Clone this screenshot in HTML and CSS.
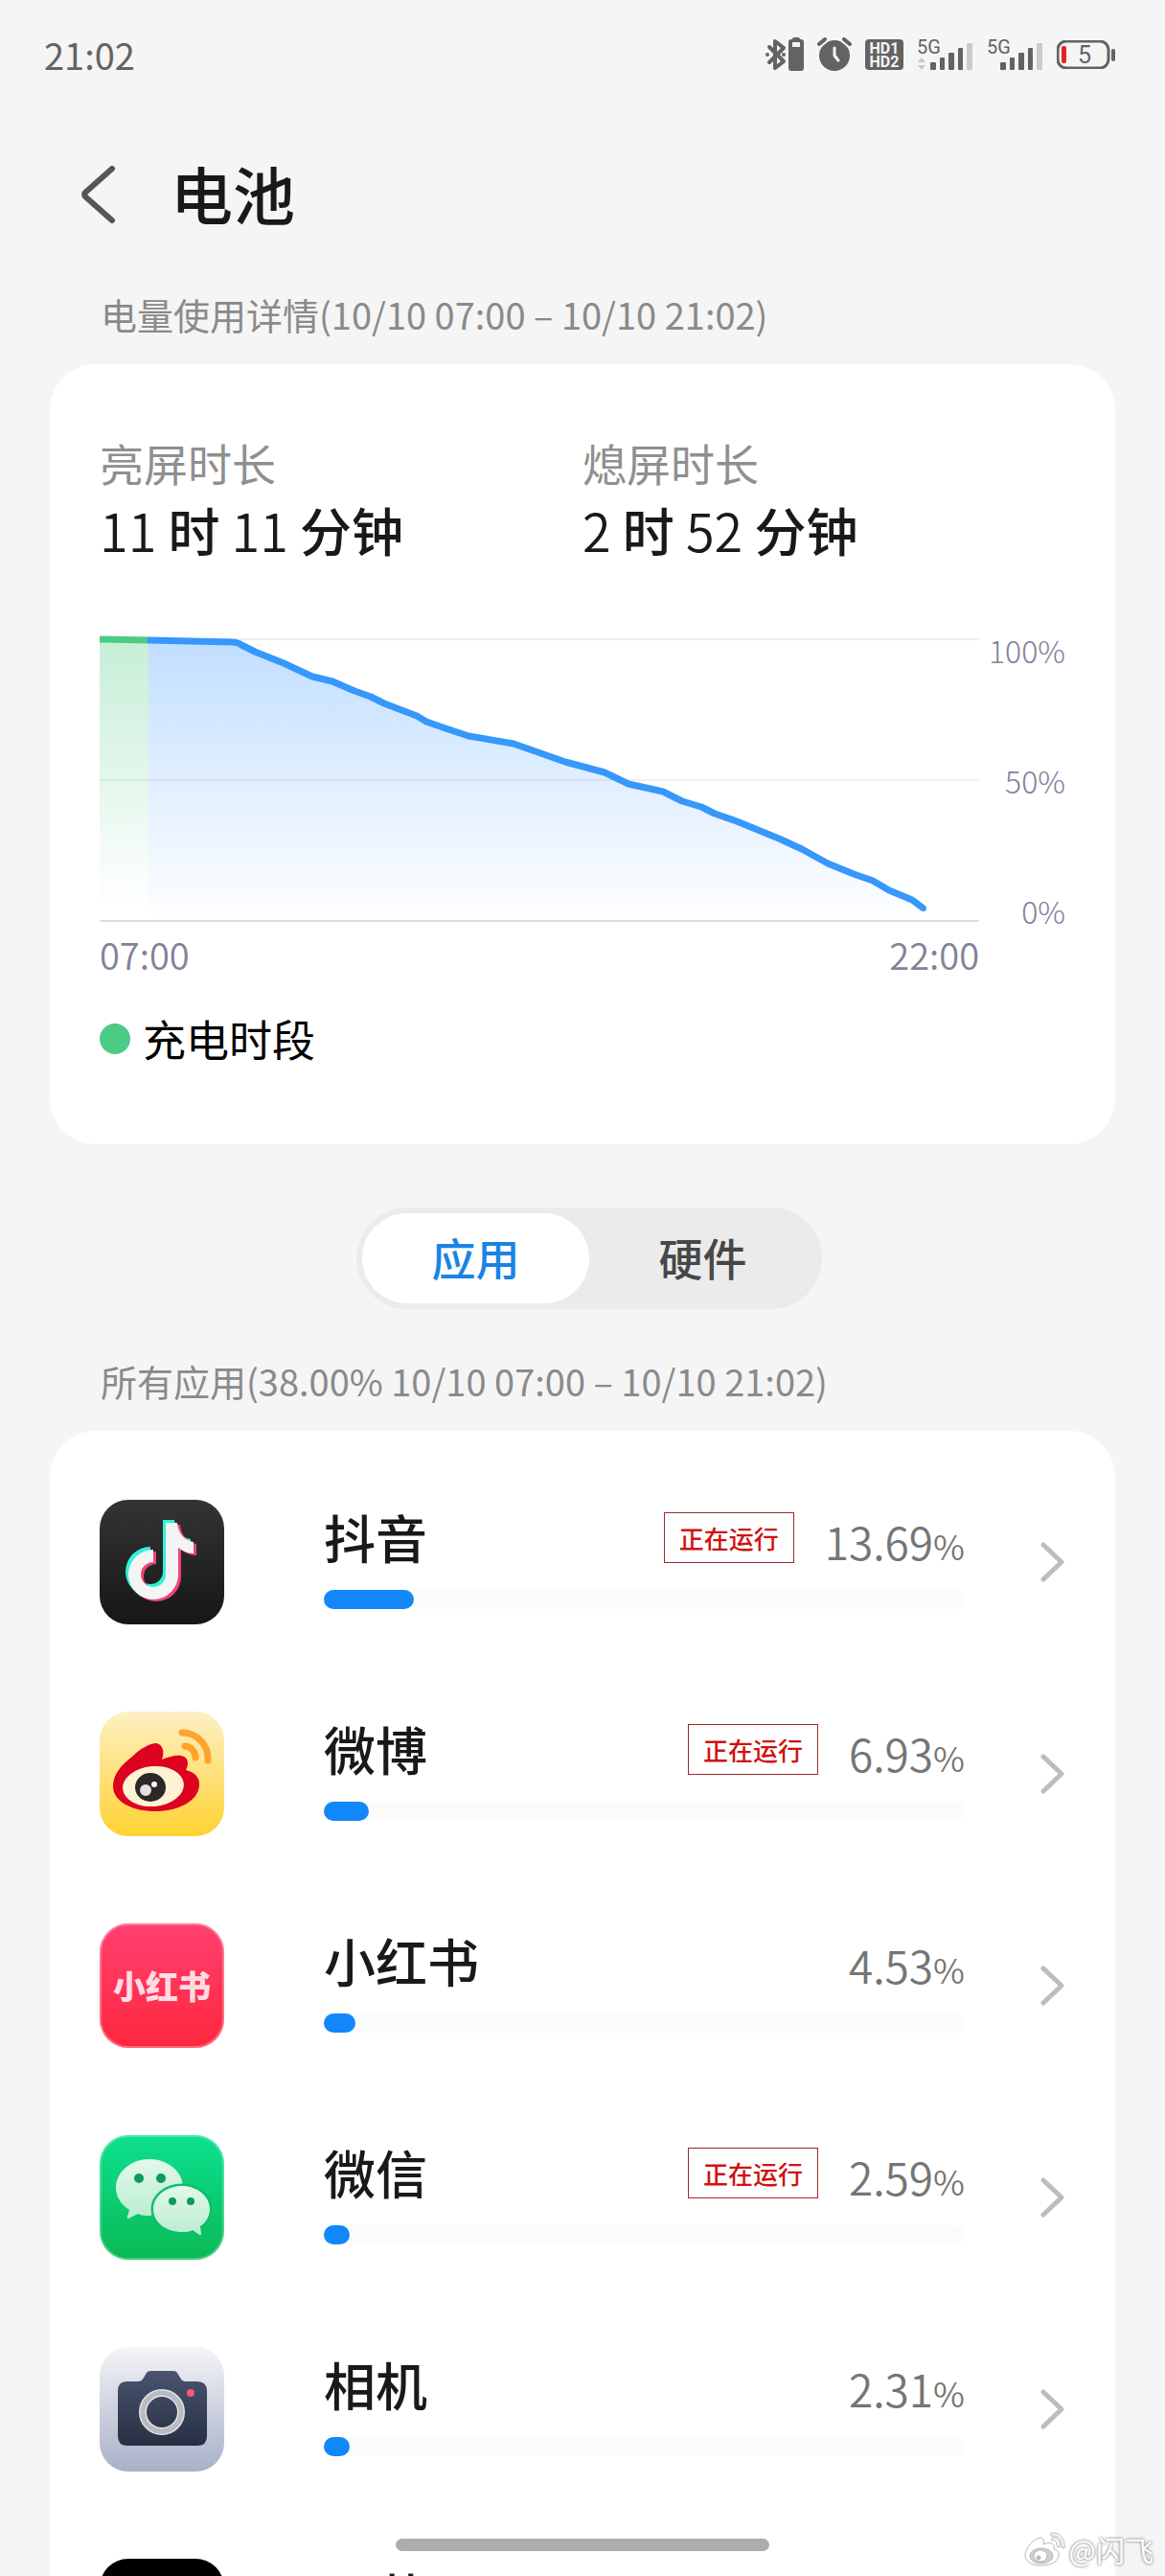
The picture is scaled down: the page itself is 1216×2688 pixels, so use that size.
FILE: index.html
```html
<!DOCTYPE html>
<html lang="zh-CN">
<head>
<meta charset="utf-8">
<meta name="viewport" content="width=device-width, initial-scale=1">
<title>电池</title>
<link rel="stylesheet" href="styles.css">
</head>
<body>
<div class="screen">
  <div class="status">
    <time class="clock">21:02</time>
    <div class="status-icons">
      <svg width="40" height="36" viewBox="0 0 40 36" aria-label="蓝牙">
        <path d="M4 10L19 25L10 32V4L19 11L4 26" fill="none" stroke="#636363" stroke-width="4" stroke-linejoin="round" stroke-linecap="round"/>
        <circle cx="2" cy="18" r="2" fill="#636363"/><circle cx="19" cy="18" r="2" fill="#636363"/>
        <path d="M28 2a2 2 0 0 1 2-2h4a2 2 0 0 1 2 2h1a3 3 0 0 1 3 3v27a3 3 0 0 1-3 3H27a3 3 0 0 1-3-3V5a3 3 0 0 1 3-3zM28 5v5h8V5z" fill="#636363" fill-rule="evenodd"/>
      </svg>
      <svg width="36" height="36" viewBox="0 0 36 36" aria-label="闹钟">
        <circle cx="18" cy="19" r="16" fill="#636363"/>
        <path d="M2 7L8 2M34 7L28 2" stroke="#f5f5f5" stroke-width="8"/>
        <path d="M2 7L8 2M34 7L28 2" stroke="#636363" stroke-width="4" stroke-linecap="round"/>
        <path d="M18 11v8l4 5" fill="none" stroke="#f5f5f5" stroke-width="3" stroke-linecap="round" stroke-linejoin="round"/>
      </svg>
      <svg width="40" height="32" viewBox="0 0 40 32" aria-label="HD">
        <rect width="40" height="32" rx="4" fill="#636363"/>
        <text class="hd" x="20" y="15" text-anchor="middle">HD1</text>
        <text class="hd" x="20" y="29" text-anchor="middle">HD2</text>
      </svg>
      <svg width="59" height="40" viewBox="0 -4 59 40" aria-label="信号 1">
        <text class="net" x="0" y="15">5G</text>
        <path d="M1 24l4-5 4 5zM1 27l4 5 4-5z" fill="#c8c8c8"/>
        <g fill="#636363"><rect x="14" y="24" width="6" height="8" rx="1"/><rect x="24" y="19" width="5" height="13" rx="1"/><rect x="33" y="14" width="6" height="18" rx="1"/><rect x="43" y="9" width="5" height="23" rx="1"/></g>
        <rect x="52" y="4" width="6" height="28" rx="1" fill="#cbcbcb"/>
      </svg>
      <svg width="59" height="40" viewBox="0 -4 59 40" aria-label="信号 2">
        <text class="net" x="0" y="15">5G</text>
        <g fill="#636363"><rect x="14" y="24" width="6" height="8" rx="1"/><rect x="24" y="19" width="5" height="13" rx="1"/><rect x="33" y="14" width="6" height="18" rx="1"/><rect x="43" y="9" width="5" height="23" rx="1"/></g>
        <rect x="52" y="4" width="6" height="28" rx="1" fill="#cbcbcb"/>
      </svg>
      <svg width="61" height="30" viewBox="0 0 61 30" aria-label="电量 5%">
        <rect x="1" y="1" width="53" height="28" rx="9" fill="none" stroke="#636363" stroke-width="3"/>
        <rect x="5" y="6" width="5" height="18" rx="2" fill="#e82020"/>
        <path d="M59 11v9" stroke="#636363" stroke-width="4" stroke-linecap="round"/>
        <text class="level" x="29" y="24" text-anchor="middle">5</text>
      </svg>
    </div>
  </div>

  <header class="header">
    <button class="back" type="button" aria-label="返回">
      <svg width="36" height="60" viewBox="0 0 36 60"><path d="M32 3L5 27Q1 30 5 33L32 57" fill="none" stroke="#565656" stroke-width="6" stroke-linecap="round"/></svg>
    </button>
    <h1>电池</h1>
  </header>

  <h2 class="caption">电量使用详情(10/10 07:00 – 10/10 21:02)</h2>
  <section class="card usage">
    <dl class="times">
      <div><dt>亮屏时长</dt><dd><b>11</b> 时 <b>11</b> 分钟</dd></div>
      <div><dt>熄屏时长</dt><dd><b>2</b> 时 <b>52</b> 分钟</dd></div>
    </dl>
    <div class="chart">
      <svg class="plot" viewBox="0 0 918 296" preserveAspectRatio="none" role="img" aria-label="电量曲线">
        <defs>
          <linearGradient id="blue" gradientUnits="userSpaceOnUse" x1="0" y1="0" x2="0" y2="296"><stop offset="0" stop-color="#c1deff"/><stop offset="1" stop-color="#fff"/></linearGradient>
          <linearGradient id="green" gradientUnits="userSpaceOnUse" x1="0" y1="0" x2="0" y2="280"><stop offset="0" stop-color="#c6eed7"/><stop offset="1" stop-color="#fff"/></linearGradient>
        </defs>
        <path d="M0 1H918" stroke="#efefef" stroke-width="2"/>
        <path d="M0 1H51V290H0Z" fill="url(#green)"/>
        <path d="M51 2L138 4L146 6L162 14L192 26L222 40L243 45L266 55L283 61L297 68L310 73L331 81L341 87L361 94L385 102L432 110L486 129L527 140L552 152L588 160L608 170L628 176L642 183L665 191L709 209L733 220L760 235L787 246L807 253L824 263L848 273L860 282V290H51Z" fill="url(#blue)"/>
        <path d="M0 148H918" stroke="#000" stroke-opacity=".05" stroke-width="2"/>
        <path d="M0 295H918" stroke="#dedede" stroke-width="2"/>
        <path d="M0 1L51 2" stroke="#4ccb84" stroke-width="7"/>
        <path d="M50 2L138 4Q144 4 148 7L162 14L192 26L222 40L243 45L266 55L283 61L297 68L310 73L331 81L341 87L361 94L385 102L432 110L486 129L527 140L552 152L588 160L608 170L628 176L642 183L665 191L709 209L733 220L760 235L787 246L807 253L824 263L848 273L860 282" fill="none" stroke="#3698fb" stroke-width="7" stroke-linejoin="round"/>
        <circle cx="860" cy="282" r="3" fill="#3698fb"/>
      </svg>
      <div class="y-axis"><span>100%</span><span>50%</span><span>0%</span></div>
      <div class="x-axis"><span>07:00</span><span>22:00</span></div>
    </div>
    <p class="legend"><i></i>充电时段</p>
  </section>

  <div class="switcher">
    <div class="segment" role="tablist">
      <button type="button" role="tab" aria-selected="true">应用</button>
      <button type="button" role="tab" aria-selected="false">硬件</button>
    </div>
  </div>

  <h2 class="caption">所有应用(38.00% 10/10 07:00 – 10/10 21:02)</h2>
  <ul class="card apps">
    <li><a class="app" href="#douyin">
      <svg class="icon" viewBox="0 0 130 130">
        <defs>
          <linearGradient id="dy" x2="0" y2="1"><stop offset="0" stop-color="#343434"/><stop offset="1" stop-color="#161616"/></linearGradient>
          <path id="note" d="M70 24H82C83 35 90 43 99 44V56C93 56 87 53 83 50V78A26 26 0 1 1 57 52V65A13 13 0 1 0 70 78Z"/>
        </defs>
        <rect width="130" height="130" rx="30" fill="url(#dy)"/>
        <use href="#note" x="-4" y="-3" fill="#2ff2dc"/><use href="#note" x="2" y="2" fill="#f0437c"/><use href="#note" x="-1" y="0" fill="#f4f4f4"/>
      </svg>
      <div class="main"><div class="line"><strong>抖音</strong><em>正在运行</em><span class="pct">13.69<small>%</small></span></div><div class="bar"><i style="width:14%"></i></div></div>
      <svg class="go" viewBox="0 0 26 42"><path d="M3 3L22 21L3 39"/></svg>
    </a></li>
    <li><a class="app" href="#weibo">
      <svg class="icon" viewBox="0 0 130 130">
        <defs><linearGradient id="wb" x2="0" y2="1"><stop offset="0" stop-color="#fdf0c4"/><stop offset="1" stop-color="#ffd233"/></linearGradient></defs>
        <rect width="130" height="130" rx="30" fill="url(#wb)"/>
        <path d="M14 78C14 66 22 56 34 47C43 38 53 33 59 33C66 34 68 42 65 50C73 47 80 45 85 46C92 47 94 54 90 61C99 63 105 69 104 77C103 94 81 104 58 104C34 104 14 94 14 78Z" fill="#dc0220"/>
        <ellipse cx="56" cy="78" rx="32" ry="21" transform="rotate(-5 56 78)" fill="#fdf3d3"/>
        <ellipse cx="53" cy="79" rx="16" ry="15" fill="#2b2827"/>
        <circle cx="48" cy="82" r="6" fill="#e2e2e2"/><circle cx="57" cy="76" r="3" fill="#fff"/>
        <path d="M86 22A27 27 0 0 1 113 51M89 36A12 12 0 0 1 100 48" fill="none" stroke="#ffa32c" stroke-width="7" stroke-linecap="round"/>
      </svg>
      <div class="main"><div class="line"><strong>微博</strong><em>正在运行</em><span class="pct">6.93<small>%</small></span></div><div class="bar"><i style="width:7%"></i></div></div>
      <svg class="go" viewBox="0 0 26 42"><path d="M3 3L22 21L3 39"/></svg>
    </a></li>
    <li><a class="app" href="#xiaohongshu">
      <svg class="icon" viewBox="0 0 130 130">
        <defs><linearGradient id="xhs" x2="0" y2="1"><stop offset="0" stop-color="#ff4070"/><stop offset="1" stop-color="#ff273e"/></linearGradient></defs>
        <rect width="130" height="130" rx="30" fill="url(#xhs)"/>
        <rect x="1" y="1" width="128" height="128" rx="29" fill="none" stroke="#fff" stroke-opacity=".3" stroke-width="2"/>
        <text class="xhs" x="65" y="79" text-anchor="middle">小红书</text>
      </svg>
      <div class="main"><div class="line"><strong>小红书</strong><span class="pct">4.53<small>%</small></span></div><div class="bar"><i style="width:5%"></i></div></div>
      <svg class="go" viewBox="0 0 26 42"><path d="M3 3L22 21L3 39"/></svg>
    </a></li>
    <li><a class="app" href="#wechat">
      <svg class="icon" viewBox="0 0 130 130">
        <defs>
          <linearGradient id="wx" x2="0" y2="1"><stop offset="0" stop-color="#0de08f"/><stop offset="1" stop-color="#0ab955"/></linearGradient>
          <linearGradient id="bub" x2="0" y2="1"><stop offset="0" stop-color="#e3f8ec"/><stop offset="1" stop-color="#b9ecd0"/></linearGradient>
        </defs>
        <rect width="130" height="130" rx="30" fill="url(#wx)"/>
        <rect x="1" y="1" width="128" height="128" rx="29" fill="none" stroke="#fff" stroke-opacity=".25" stroke-width="2"/>
        <path d="M52 25C71 25 87 38 87 54C87 71 71 84 52 84C48 84 44 84 40 82L30 87Q28 88 29 85L31 78C22 72 17 64 17 55C17 38 33 25 52 25Z" fill="url(#bub)"/>
        <path d="M86 53C102 53 115 64 115 77C115 85 111 91 105 95L106 103Q106 105 104 104L97 99C93 101 90 101 86 101C69 101 56 91 56 77C56 64 69 53 86 53Z" fill="url(#bub)" stroke="#09c06a" stroke-width="5" paint-order="stroke"/>
        <g fill="#0c9c57"><circle cx="41" cy="45" r="5"/><circle cx="64" cy="45" r="5"/><circle cx="76" cy="69" r="4"/><circle cx="95" cy="69" r="4"/></g>
      </svg>
      <div class="main"><div class="line"><strong>微信</strong><em>正在运行</em><span class="pct">2.59<small>%</small></span></div><div class="bar"><i style="width:4%"></i></div></div>
      <svg class="go" viewBox="0 0 26 42"><path d="M3 3L22 21L3 39"/></svg>
    </a></li>
    <li><a class="app" href="#camera">
      <svg class="icon" viewBox="0 0 130 130">
        <defs>
          <linearGradient id="cam" x2="0" y2="1"><stop offset="0" stop-color="#f4f5f7"/><stop offset=".5" stop-color="#cdd2e0"/><stop offset="1" stop-color="#a9b1c8"/></linearGradient>
          <linearGradient id="body" x2="0" y2="1"><stop offset="0" stop-color="#4a5470"/><stop offset="1" stop-color="#262f42"/></linearGradient>
        </defs>
        <rect width="130" height="130" rx="30" fill="url(#cam)"/>
        <path d="M28 36H40Q44 36 46 32L49 27Q50 25 54 25H77Q80 25 81 27L84 32Q86 36 90 36H102Q112 36 112 46V93Q112 103 102 103H29Q19 103 19 93V46Q19 36 28 36Z" fill="url(#body)"/>
        <circle cx="65" cy="68" r="20" fill="none" stroke="#e2e3e7" stroke-width="8"/>
        <circle cx="65" cy="68" r="20" fill="none" stroke="#b9bbc1" stroke-width="5"/>
        <circle cx="95" cy="48" r="4" fill="#ff5573"/>
      </svg>
      <div class="main"><div class="line"><strong>相机</strong><span class="pct">2.31<small>%</small></span></div><div class="bar"><i style="width:4%"></i></div></div>
      <svg class="go" viewBox="0 0 26 42"><path d="M3 3L22 21L3 39"/></svg>
    </a></li>
    <li><a class="app" href="#more">
      <svg class="icon" viewBox="0 0 130 130"><rect width="130" height="130" rx="30"/></svg>
      <div class="main"><div class="line"><strong>豆荚</strong></div><div class="bar"></div></div>
      <svg class="go" viewBox="0 0 26 42"><path d="M3 3L22 21L3 39"/></svg>
    </a></li>
  </ul>

  <div class="home-bar"></div>
  <div class="watermark">
    <svg width="44" height="38" viewBox="0 0 44 38">
      <g fill="#fff" stroke="#b5b5b5" stroke-width="1">
        <path d="M2 25C2 18 11 8 18 7C22 7 22 11 21 14C27 11 34 12 32 19C36 20 38 23 37 26C36 33 27 36 19 36C9 36 2 32 2 25Z"/>
        <ellipse cx="19" cy="26" rx="12" ry="8" fill="#d0d0d0"/><ellipse cx="18" cy="26" rx="7" ry="6"/>
        <circle cx="16" cy="28" r="2" fill="#bbb"/>
        <path d="M29 5C37 4 41 10 40 17L43 18C44 8 38 1 29 2ZM30 10C34 9 36 12 35 16L38 17C39 10 36 6 30 7Z"/>
      </g>
    </svg>
    <span>@闪飞</span>
  </div>
</div>
</body>
</html>
```
FILE: styles.css
```css
* { box-sizing: border-box; }
body {
  margin: 0;
  background: #f5f5f5;
  color: #191919;
  font-family: "Noto Sans CJK SC", sans-serif;
}
h1, h2, p, dl, dd, ul { margin: 0; padding: 0; }
button { border: 0; padding: 0; background: none; font: inherit; color: inherit; cursor: pointer; }
svg { display: block; flex: none; }

.screen { position: relative; height: 100vh; overflow: hidden; padding: 0 52px; }

.status { display: flex; align-items: center; justify-content: space-between; height: 114px; margin: 0 0 0 -6px; }
.clock { font-size: 38px; line-height: 48px; color: #636363; }
.status-icons { display: flex; align-items: center; gap: 14px; }
.hd { font: 700 16px Roboto, sans-serif; fill: #f5f5f5; }
.net { font: 400 20px Roboto, sans-serif; fill: #636363; }
.level { font: 400 25px Roboto, sans-serif; fill: #636363; }

.header { display: flex; align-items: center; gap: 57px; height: 96px; margin: 41px 0 49px; padding-left: 33px; }
h1 { font-size: 65px; font-weight: 500; line-height: 92px; padding-bottom: 4px; }

.caption { margin: 0 0 24px 53px; font-size: 38px; font-weight: 400; line-height: 56px; color: #8a8a8a; }

.card { border-radius: 48px; background: #fff; }
.usage { padding: 72px 52px 80px; }
.times { display: grid; grid-template-columns: 1fr 1fr; margin-bottom: 72px; }
dt { font-size: 46px; line-height: 60px; color: #8f8f8f; }
dd { font-size: 54px; font-weight: 500; line-height: 82px; }
dd b { font-weight: 350; }

.chart { display: grid; grid-template-columns: 1fr 90px; row-gap: 12px; color: #82829a; }
.plot { width: 100%; height: 296px; overflow: visible; }
.y-axis { display: flex; flex-direction: column; justify-content: space-between; align-items: flex-end; font-size: 32px; font-weight: 300; line-height: 24px; }
.x-axis { display: flex; justify-content: space-between; font-size: 38px; font-weight: 350; line-height: 44px; }
.legend { display: flex; align-items: center; gap: 13px; margin-top: 36px; font-size: 45px; line-height: 60px; color: #000; }
.legend i { width: 32px; height: 32px; border-radius: 50%; background: #4ccb84; }

.switcher { display: flex; justify-content: center; padding: 66px 0 47px 14px; }
.segment { display: grid; grid-template-columns: 1fr 1fr; width: 486px; padding: 6px; border-radius: 54px; background: #ebebeb; }
.segment button { height: 94px; padding-bottom: 4px; border-radius: 48px; font-size: 46px; font-weight: 500; line-height: 60px; color: #474747; }
.segment [aria-selected="true"] { background: #fff; color: #1a84e4; }

.apps { display: grid; gap: 91px; padding: 72px 52px; list-style: none; }
.app { display: flex; align-items: center; color: inherit; text-decoration: none; }
.icon { width: 130px; height: 130px; margin-right: 104px; }
.xhs { font: 900 34px "Noto Sans CJK SC", sans-serif; fill: #ffdbe3; }
.main { flex: 1; height: 130px; }
.line { display: flex; align-items: center; height: 78px; margin-bottom: 16px; }
strong { flex: 1; font-size: 54px; font-weight: 500; line-height: 78px; }
em { margin-right: 32px; padding: 0 15px; border: 1px solid #9c2b2b; font-size: 26px; font-style: normal; font-weight: 500; line-height: 51px; color: #d01212; }
.pct { padding-top: 8px; font-size: 46px; font-weight: 350; line-height: 70px; color: #757575; }
small { font-size: 36px; line-height: 36px; }
.bar { height: 20px; border-radius: 10px; background: #fbfbfb; }
.bar i { display: block; height: 20px; min-width: 27px; border-radius: 10px; background: #1187f9; }
.go { width: 26px; height: 42px; margin-left: 79px; }
.go path { fill: none; stroke: #bdbdbd; stroke-width: 5; stroke-linecap: round; stroke-linejoin: round; }

.home-bar { position: absolute; bottom: 26px; left: 50%; width: 390px; height: 13px; margin-left: -195px; border-radius: 7px; background: #adadad; }
.watermark { position: absolute; right: 12px; bottom: 6px; display: flex; align-items: center; gap: 4px; font-size: 30px; line-height: 44px; color: #fff; text-shadow: 0 0 3px #999, 0 0 3px #999; }
```
